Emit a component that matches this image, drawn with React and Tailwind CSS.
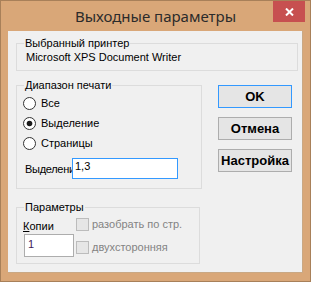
import React from "react";

function Radio({ checked }) {
  return (
    <svg width="13" height="13" viewBox="0 0 13 13" className="shrink-0">
      <circle cx="6.5" cy="6.5" r="6" fill="#ffffff" stroke="#333333" strokeWidth="1" />
      {checked && <circle cx="6.5" cy="6.5" r="2.8" fill="#1a1a1a" />}
    </svg>
  );
}

function Check() {
  return <div className="w-[13px] h-[13px] shrink-0 border border-[#bcbcbc] bg-[#e6e6e6]" />;
}

function Group({ label, className, children }) {
  return (
    <div className={"relative border border-[#dcdcdc] " + className}>
      <div className="absolute -top-[7px] left-[7px] px-px bg-[#f0f0f0] leading-[13px] text-[11px] text-black whitespace-nowrap">
        {label}
      </div>
      {children}
    </div>
  );
}

function Btn({ children, focused }) {
  return (
    <div
      className={
        "w-[74px] h-[23px] flex items-center justify-center bg-[#e5e5e5] border text-[13px] font-bold text-black leading-none " +
        (focused ? "border-[#3399ff]" : "border-[#adadad]")
      }
    >
      {children}
    </div>
  );
}

export default function App() {
  return (
    <div
      className="w-[311px] h-[282px] bg-[#d9a778] border border-[#a88059] flex flex-col select-none"
      style={{ fontFamily: '"Liberation Sans", Arial, sans-serif' }}
    >
      <div className="relative h-[30px] flex justify-center pt-[7px]">
        <div
          className="text-[15px] leading-[17px] text-[#2b2b2b]"
          style={{ fontFamily: '"Noto Sans", "Open Sans", sans-serif' }}
        >
          Выходные параметры
        </div>
        <div className="absolute top-0 right-[5px] w-[32px] h-[21px] bg-[#c75050] flex items-center justify-center">
          <svg width="9" height="8" viewBox="0 0 9 8">
            <path d="M1 0.5 L8 7.5 M8 0.5 L1 7.5" stroke="#ffffff" strokeWidth="2" />
          </svg>
        </div>
      </div>

      <div className="mx-[7px] w-[295px] h-[242px] bg-[#f0f0f0] border-r border-b border-[#c9a884] pl-[8px] pt-[12px] flex flex-col">
        <Group label="Выбранный принтер" className="w-[282px] h-[28px]">
          <div className="pl-[9px] pt-[7px] text-[11px] leading-[13px] text-black whitespace-nowrap">
            Microsoft XPS Document Writer
          </div>
        </Group>

        <div className="mt-[14px] flex items-start">
          <Group label="Диапазон печати" className="w-[186px] h-[104px]">
            <div className="pl-[6px] pt-[11px] flex flex-col">
              <div className="flex flex-col gap-[7px]">
                <div className="h-[13px] flex items-center gap-[5px] text-[11px] leading-[13px]">
                  <Radio />
                  <span>Все</span>
                </div>
                <div className="h-[13px] flex items-center gap-[5px] text-[11px] leading-[13px]">
                  <Radio checked />
                  <span>Выделение</span>
                </div>
                <div className="h-[13px] flex items-center gap-[5px] text-[11px] leading-[13px]">
                  <Radio />
                  <span>Страницы</span>
                </div>
              </div>
              <div className="mt-[8px] flex items-start">
                <div className="ml-[2px] w-[47px] mt-[5px] overflow-hidden whitespace-nowrap text-[11px] leading-[13px] tracking-[-0.3px]">
                  Выделени
                </div>
                <div className="w-[106px] h-[21px] border border-[#3399ff] bg-white pl-[2px] pt-[1px] text-[11px] leading-[13px] text-black">
                  1,3
                </div>
              </div>
            </div>
          </Group>

          <div className="ml-[16px] flex flex-col gap-[9px]">
            <Btn focused>OK</Btn>
            <Btn>Отмена</Btn>
            <Btn>Настройка</Btn>
          </div>
        </div>

        <Group label="Параметры" className="mt-[18px] w-[184px] h-[57px]">
          <div className="flex">
            <div className="pl-[6px] pt-[12px] flex flex-col">
              <div className="text-[11px] leading-[13px]">
                <span className="underline underline-offset-[1px]">К</span>опии
              </div>
              <div className="ml-[1px] mt-[1px] w-[50px] h-[23px] border border-[#adadad] bg-white pl-[3px] pt-[3px] text-[11px] leading-[13px] text-[#40205a]">
                1
              </div>
            </div>
            <div className="ml-[2px] pt-[10px] flex flex-col gap-[10px]">
              <div className="h-[13px] flex items-center gap-[3px] text-[11px] leading-[13px] text-[#838383] whitespace-nowrap">
                <Check />
                <span>разобрать по стр.</span>
              </div>
              <div className="h-[13px] flex items-center gap-[3px] text-[11px] leading-[13px] text-[#838383] whitespace-nowrap">
                <Check />
                <span>двухсторонняя</span>
              </div>
            </div>
          </div>
        </Group>
      </div>
    </div>
  );
}
